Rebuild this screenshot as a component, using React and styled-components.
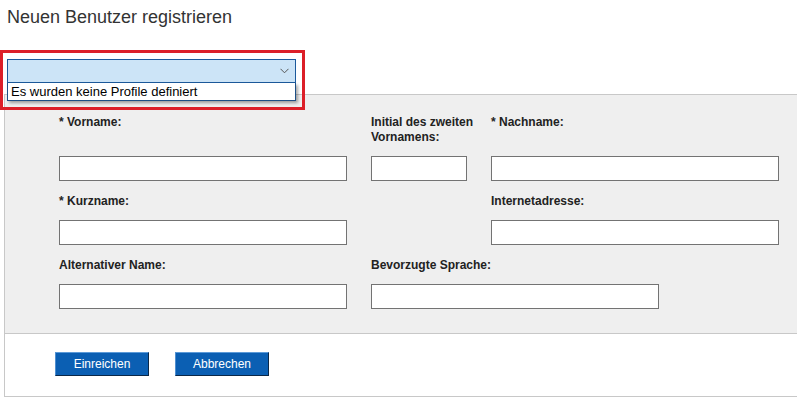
import React from "react";
import styled, { createGlobalStyle } from "styled-components";

const Global = createGlobalStyle`
  html, body { margin: 0; padding: 0; background: #fff; overflow: hidden; }
  body { font-family: "Liberation Sans", Arial, sans-serif; }
`;

const Page = styled.div`
  width: 797px;
  height: 398px;
  overflow: hidden;
  display: flex;
  flex-direction: column;
`;

const Title = styled.h1`
  margin: 7px 0 0 7px;
  font-size: 18px;
  font-weight: normal;
  line-height: 21px;
  color: #333;
`;

const ProfileArea = styled.div`
  position: relative;
  margin: 31px 0 0 7px;
  width: 289px;
  z-index: 2;
`;

const SelectBox = styled.div`
  box-sizing: border-box;
  height: 24px;
  background: #cce4f7;
  border: 1px solid #1c5a9c;
  display: flex;
  align-items: center;
  justify-content: flex-end;
  padding-right: 6px;
`;

const OptionList = styled.div`
  position: absolute;
  left: 0;
  right: 0;
  top: 24px;
  box-sizing: border-box;
  height: 18px;
  background: #fff;
  border: 1px solid #1c4f86;
  border-top: none;
  box-shadow: 2px 2px 3px rgba(0, 0, 0, 0.35);
  font-size: 13px;
  line-height: 17px;
  color: #000;
  padding-left: 3px;
  white-space: nowrap;
`;

const Highlight = styled.div`
  position: absolute;
  left: -7px;
  top: -9px;
  width: 305px;
  height: 60px;
  box-sizing: border-box;
  border: 3px solid #dc1f28;
  pointer-events: none;
`;

const Panel = styled.div`
  margin: 11px 0 0 4px;
  border: 1px solid #c8c8c8;
  border-right: none;
`;

const FormArea = styled.div`
  background: #efefef;
  padding: 20px 0 24px 54px;
  display: grid;
  grid-template-columns: 288px 96px 288px;
  column-gap: 24px;
  row-gap: 13px;
`;

const Field = styled.div`
  display: flex;
  flex-direction: column;
  grid-column: ${(p) => p.$col || "auto"};
`;

const Label = styled.label`
  flex: 1;
  font-size: 12px;
  font-weight: bold;
  line-height: 15px;
  color: #222;
  margin-bottom: 11px;
  white-space: nowrap;
`;

const TextInput = styled.input`
  box-sizing: border-box;
  height: 25px;
  width: ${(p) => p.$w || "100%"};
  margin: 0;
  border: 1px solid #737373;
  background: #fff;
  padding: 0 4px;
  font-family: inherit;
  font-size: 12px;
  outline: none;
`;

const Footer = styled.div`
  border-top: 1px solid #c8c8c8;
  padding: 18px 0 20px 50px;
  display: flex;
  gap: 26px;
`;

const Button = styled.button`
  box-sizing: border-box;
  width: 94px;
  height: 24px;
  margin: 0;
  padding: 0;
  background: #0b5fb3;
  color: #fff;
  font-family: "Liberation Sans", Arial, sans-serif;
  font-size: 12px;
  border: 1px solid;
  border-color: #5c9ad8 #0a2747 #0a2747 #4f8fd0;
  cursor: pointer;
`;

const Chevron = () => (
  <svg width="9" height="6" viewBox="0 0 9 6" aria-hidden="true">
    <polyline points="0.5,0.8 4.5,4.8 8.5,0.8" fill="none" stroke="#555" strokeWidth="1" />
  </svg>
);

export default function App() {
  return (
    <Page>
      <Global />
      <Title>Neuen Benutzer registrieren</Title>
      <ProfileArea>
        <SelectBox>
          <Chevron />
        </SelectBox>
        <OptionList>Es wurden keine Profile definiert</OptionList>
        <Highlight />
      </ProfileArea>
      <Panel>
        <FormArea>
          <Field $col="1">
            <Label>* Vorname:</Label>
            <TextInput />
          </Field>
          <Field $col="2">
            <Label>
              Initial des zweiten
              <br />
              Vornamens:
            </Label>
            <TextInput />
          </Field>
          <Field $col="3">
            <Label>* Nachname:</Label>
            <TextInput />
          </Field>
          <Field $col="1">
            <Label>* Kurzname:</Label>
            <TextInput />
          </Field>
          <Field $col="3">
            <Label>Internetadresse:</Label>
            <TextInput />
          </Field>
          <Field $col="1">
            <Label>Alternativer Name:</Label>
            <TextInput />
          </Field>
          <Field $col="2 / 4">
            <Label>Bevorzugte Sprache:</Label>
            <TextInput $w="288px" />
          </Field>
        </FormArea>
        <Footer>
          <Button>Einreichen</Button>
          <Button>Abbrechen</Button>
        </Footer>
      </Panel>
    </Page>
  );
}
